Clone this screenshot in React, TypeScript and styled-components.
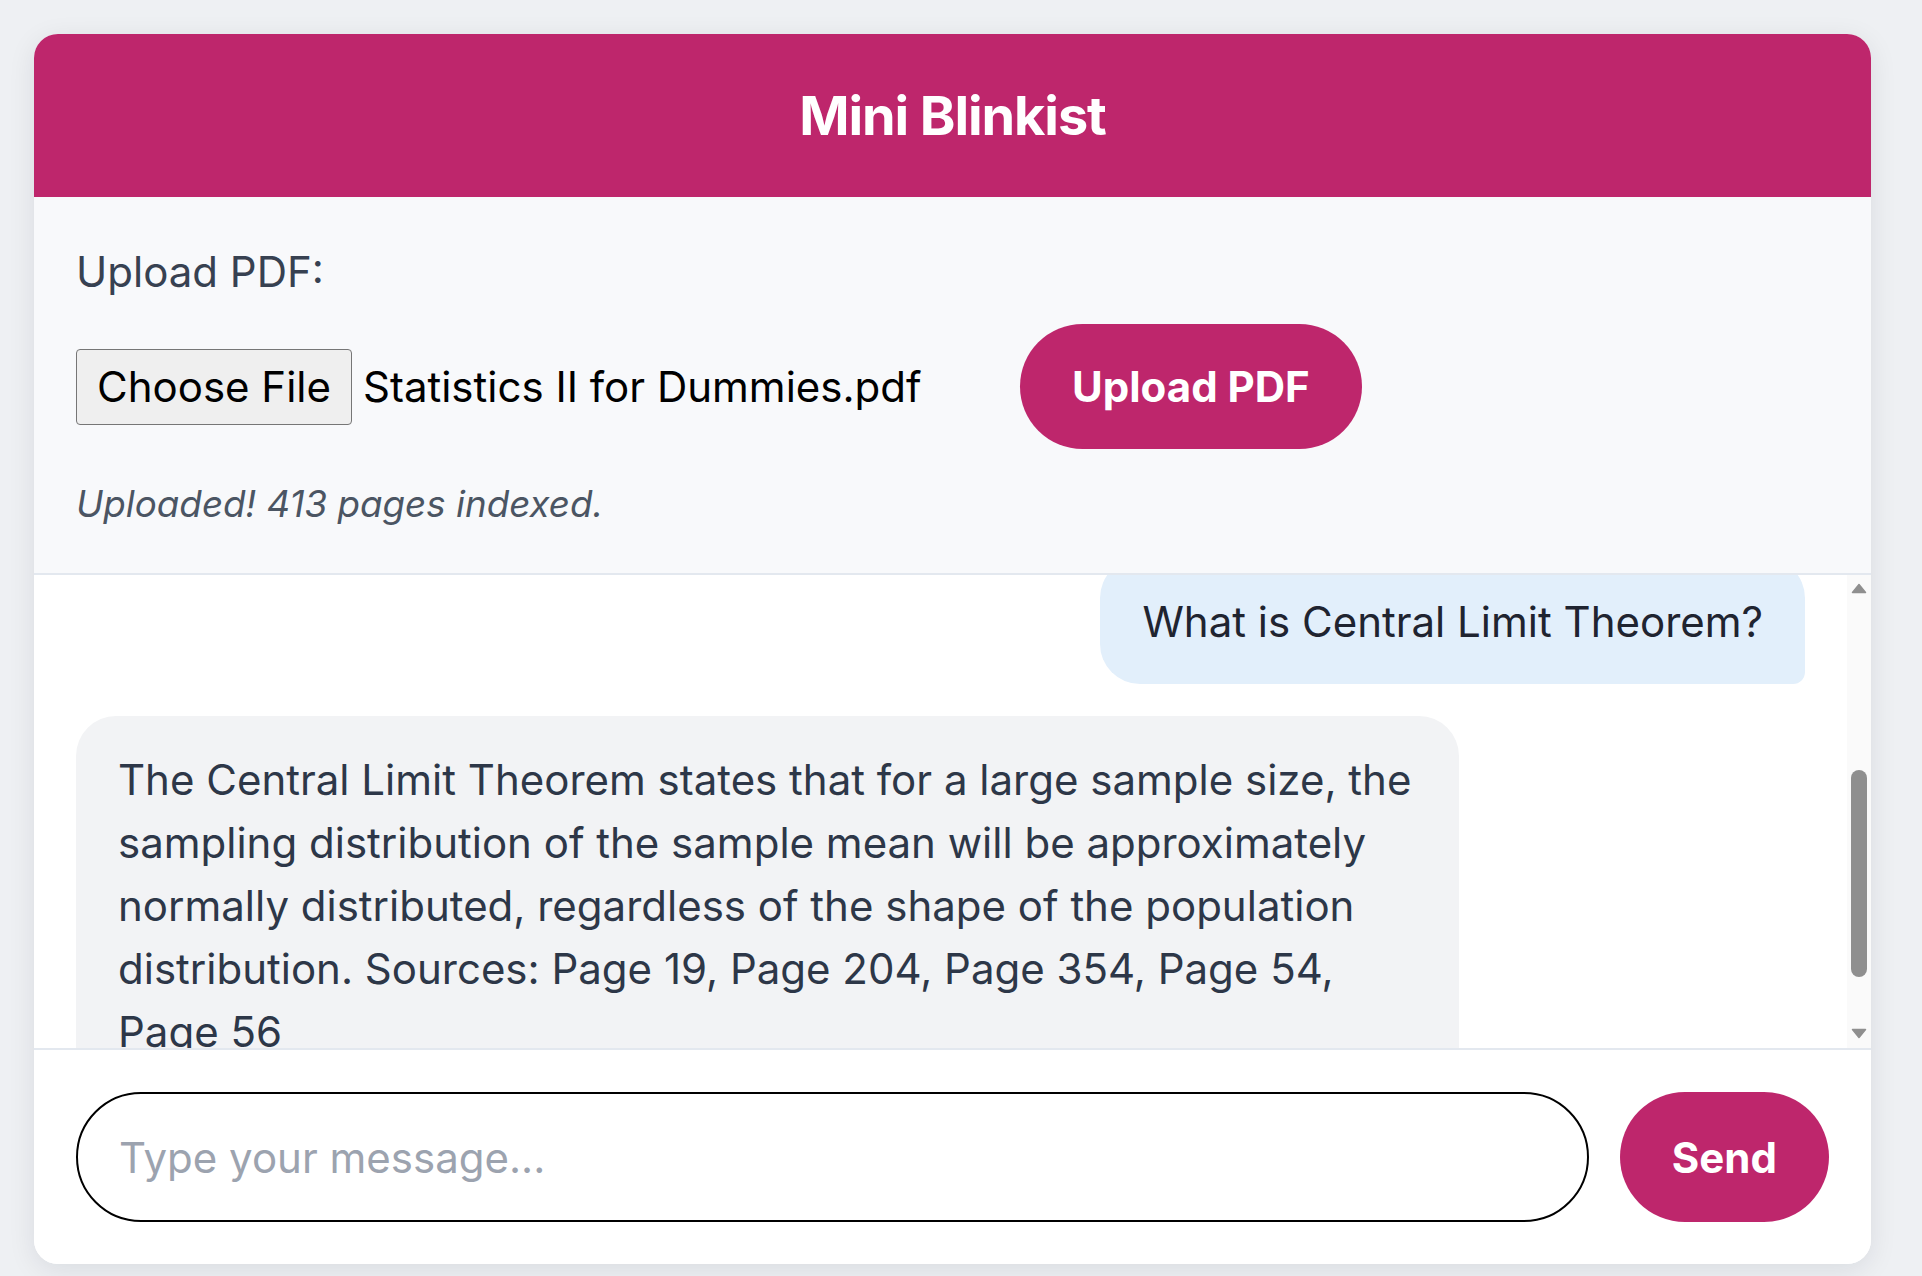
import React, { useLayoutEffect, useRef } from "react";
import styled, { createGlobalStyle } from "styled-components";

const GlobalStyle = createGlobalStyle`
  *, *::before, *::after { box-sizing: border-box; }
  html, body {
    margin: 0;
    padding: 0;
    background: #eef0f3;
  }
  body {
    font-family: Inter, "Noto Sans", "Liberation Sans", sans-serif;
    overflow: hidden;
  }
`;

const Page = styled.div`
  padding: 34px 51px 34px 34px;
`;

const Card = styled.main`
  width: 1837px;
  height: 1230px;
  background: #ffffff;
  border-radius: 24px;
  overflow: hidden;
  box-shadow: 0 6px 28px rgba(15, 23, 42, 0.09);
  display: flex;
  flex-direction: column;
`;

const Header = styled.header`
  flex-shrink: 0;
  height: 163px;
  background: #be266c;
  display: flex;
  align-items: center;
  justify-content: center;
`;

const Title = styled.h1`
  margin: 0;
  color: #ffffff;
  font-family: Inter, "Noto Sans", sans-serif;
  font-size: 54px;
  font-weight: 700;
  letter-spacing: -0.02em;
`;

const UploadSection = styled.section`
  flex-shrink: 0;
  background: #f8f9fb;
  padding: 43px 42px 41px;
  border-bottom: 2px solid #e3e8ef;
`;

const Label = styled.div`
  font-size: 42px;
  line-height: 63px;
  color: #374151;
`;

const UploadRow = styled.div`
  display: flex;
  align-items: center;
  gap: 24px;
  margin-top: 21px;
`;

const FilePicker = styled.div`
  width: 920px;
  display: flex;
  align-items: center;
  gap: 11px;
`;

const FileButton = styled.button`
  height: 76px;
  padding: 0 20px;
  font-family: Inter, "Noto Sans", sans-serif;
  font-size: 42px;
  color: #000000;
  background: #efefef;
  border: 1px solid #767676;
  border-radius: 4px;
`;

const FileName = styled.span`
  font-size: 42px;
  color: #000000;
  white-space: nowrap;
`;

const PillButton = styled.button<{ $padX: number }>`
  background: #be266c;
  color: #ffffff;
  border: none;
  border-radius: 999px;
  font-family: Inter, "Noto Sans", sans-serif;
  font-weight: 700;
  font-size: 42px;
  line-height: 63px;
  padding: 31px ${(p) => p.$padX}px;
  white-space: nowrap;
  cursor: pointer;
`;

const Status = styled.p`
  margin: 26px 0 0;
  font-size: 36.75px;
  line-height: 57px;
  font-style: italic;
  color: #4b5563;
`;

const ChatWrap = styled.div`
  flex: 1;
  min-height: 0;
  position: relative;
`;

const Messages = styled.div`
  height: 100%;
  overflow-y: auto;
  scrollbar-width: none;
  padding: 42px 66px 42px 42px;
  display: flex;
  flex-direction: column;
  gap: 32px;
  &::-webkit-scrollbar {
    display: none;
  }
`;

const Bubble = styled.div<{ $from: "user" | "bot" }>`
  max-width: 80%;
  flex-shrink: 0;
  padding: 31.5px 42px;
  font-size: 42px;
  line-height: 63px;
  align-self: ${(p) => (p.$from === "user" ? "flex-end" : "flex-start")};
  background: ${(p) => (p.$from === "user" ? "#e2effb" : "#f2f3f5")};
  color: ${(p) => (p.$from === "user" ? "#1f2430" : "#2d3748")};
  border-radius: ${(p) =>
    p.$from === "user" ? "40px 40px 12px 40px" : "40px 40px 40px 12px"};
`;

const ScrollTrack = styled.div`
  position: absolute;
  top: 0;
  right: 0;
  bottom: 0;
  width: 24px;
  background: #fafafa;
`;

const ScrollThumb = styled.div`
  position: absolute;
  left: 4px;
  top: 195px;
  width: 16px;
  height: 207px;
  border-radius: 8px;
  background: #8f8f8f;
`;

const ScrollArrow = styled.svg<{ $dir: "up" | "down" }>`
  position: absolute;
  left: 4px;
  width: 16px;
  height: 11px;
  ${(p) => (p.$dir === "up" ? "top: 8px;" : "bottom: 9px;")}
`;

const Composer = styled.form`
  flex-shrink: 0;
  display: flex;
  gap: 31px;
  padding: 42px;
  border-top: 2px solid #e3e8ef;
  background: #ffffff;
`;

const MessageInput = styled.input`
  flex: 1;
  min-width: 0;
  font-family: Inter, "Noto Sans", sans-serif;
  font-size: 42px;
  line-height: 63px;
  padding: 31.5px 41px;
  border: 2px solid #000000;
  border-radius: 999px;
  color: #111827;
  background: #ffffff;
  outline: none;
  &::placeholder {
    color: #9ca3af;
  }
`;

export default function App() {
  const listRef = useRef<HTMLDivElement>(null);

  useLayoutEffect(() => {
    if (listRef.current) listRef.current.scrollTop = 59;
  }, []);

  return (
    <>
      <GlobalStyle />
      <Page>
        <Card>
          <Header>
            <Title>Mini Blinkist</Title>
          </Header>

          <UploadSection>
            <Label>Upload PDF:</Label>
            <UploadRow>
              <FilePicker>
                <FileButton type="button">Choose File</FileButton>
                <FileName>Statistics II for Dummies.pdf</FileName>
              </FilePicker>
              <PillButton type="button" $padX={52}>
                Upload PDF
              </PillButton>
            </UploadRow>
            <Status>Uploaded! 413 pages indexed.</Status>
          </UploadSection>

          <ChatWrap>
            <Messages ref={listRef}>
              <Bubble $from="user">What is Central Limit Theorem?</Bubble>
              <Bubble $from="bot">
                The Central Limit Theorem states that for a large sample size,
                the sampling distribution of the sample mean will be
                approximately normally distributed, regardless of the shape of
                the population distribution. Sources: Page 19, Page 204, Page
                354, Page 54, Page 56
              </Bubble>
            </Messages>
            <ScrollTrack>
              <ScrollArrow $dir="up" viewBox="0 0 16 11">
                <path d="M8 1.5 L14.5 9.5 H1.5 Z" fill="#8f8f8f" stroke="#8f8f8f" strokeWidth="1.5" strokeLinejoin="round" />
              </ScrollArrow>
              <ScrollThumb />
              <ScrollArrow $dir="down" viewBox="0 0 16 11">
                <path d="M8 9.5 L14.5 1.5 H1.5 Z" fill="#8f8f8f" stroke="#8f8f8f" strokeWidth="1.5" strokeLinejoin="round" />
              </ScrollArrow>
            </ScrollTrack>
          </ChatWrap>

          <Composer onSubmit={(e) => e.preventDefault()}>
            <MessageInput placeholder="Type your message..." />
            <PillButton type="submit" $padX={52}>
              Send
            </PillButton>
          </Composer>
        </Card>
      </Page>
    </>
  );
}
